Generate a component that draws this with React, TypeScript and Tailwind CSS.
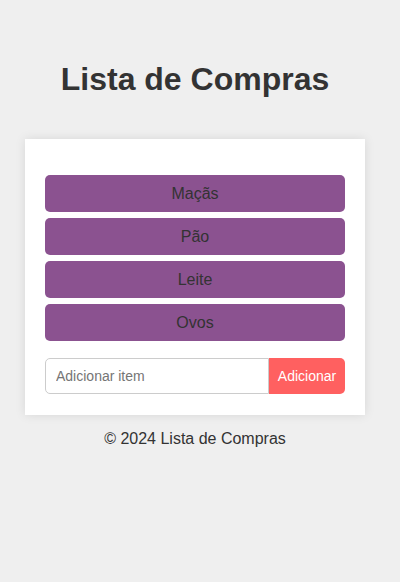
import React from "react";

export default function App() {
  const items = ["Maçãs", "Pão", "Leite", "Ovos"];
  return (
    <div className="min-h-[582px] bg-[#efefef] text-[#333] flex flex-col items-center pr-[10px]" style={{ fontFamily: '"Liberation Sans", Arial, sans-serif' }}>
      <h1 className="mt-[61px] mb-[41px] h-[37px] leading-[37px] text-[32px] font-bold text-[#333]">Lista de Compras</h1>
      <div className="w-[340px] bg-white px-5 pt-[36px] pb-[21px] shadow-[0_0_10px_rgba(0,0,0,0.1)]">
        <ul className="flex flex-col gap-[6px]">
          {items.map((it) => (
            <li key={it} className="h-[37px] rounded-[5px] bg-[#8b5290] flex items-center justify-center text-[16px] text-[#333]">{it}</li>
          ))}
        </ul>
        <div className="mt-[17px] flex h-[36px]">
          <input
            placeholder="Adicionar item"
            className="flex-1 min-w-0 h-full border border-[#ccc] rounded-l-[5px] px-[10px] text-[14px] text-[#333] placeholder:text-[#757575] outline-none bg-white"
            style={{ fontFamily: '"Liberation Sans", Arial, sans-serif' }}
          />
          <button className="w-[76px] h-full bg-[#ff6060] text-white text-[14px] font-medium rounded-r-[5px]" style={{ fontFamily: '"Liberation Sans", Arial, sans-serif' }}>Adicionar</button>
        </div>
      </div>
      <footer className="mt-[15px] text-[16px] leading-[18px] text-[#333]">© 2024 Lista de Compras</footer>
    </div>
  );
}
